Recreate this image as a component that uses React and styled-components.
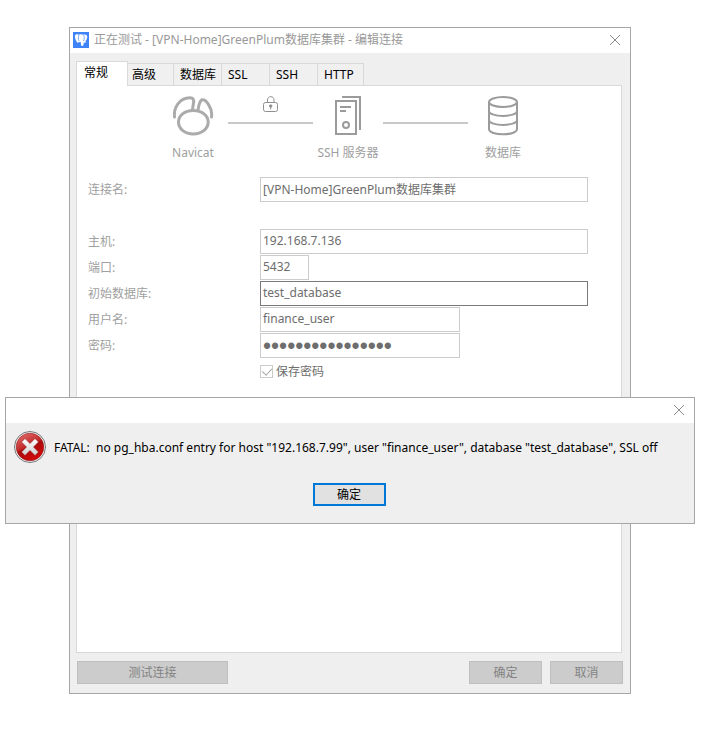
import React from "react";
import styled, { createGlobalStyle } from "styled-components";

const GlobalStyle = createGlobalStyle`
  * { box-sizing: border-box; }
  body { margin: 0; background: #fff; }
  body, button, input {
    font-family: "Noto Sans", "Noto Sans CJK SC", sans-serif;
    font-size: 12px;
    line-height: 18px;
  }
`;

const Desktop = styled.div`
  position: relative;
  display: flex;
  min-height: 100vh;
  padding: 27px 83px 37px 69px;
`;

const Window = styled.main`
  flex: 1;
  display: flex;
  flex-direction: column;
  border: 1px solid #a6a6a6;
  background: #efefef;
`;

const TitleBar = styled.header`
  display: flex;
  align-items: center;
  gap: 5px;
  height: 25px;
  padding: 0 9px 1px 3px;
  background: #fff;
`;

const Title = styled.h1`
  flex: 1;
  margin: 0;
  color: #999;
  font-size: 12px;
  font-weight: 400;
  white-space: nowrap;
`;

const CloseButton = styled.button`
  display: flex;
  margin-left: auto;
  padding: 0;
  border: 0;
  background: none;
  color: #8c8c8c;
`;

const Tabs = styled.div`
  display: flex;
  align-items: flex-end;
  height: 32px;
  padding: 0 6px;
`;

const Tab = styled.button`
  width: ${(p) => (p.$last ? 46 : 48)}px;
  height: 22px;
  padding: 0 0 0 6px;
  border: solid #d9d9d9;
  border-width: 1px 1px 0 0;
  background: #f0f0f0;
  color: #000;
  text-align: left;
  white-space: nowrap;

  &[aria-selected="true"] {
    z-index: 1;
    width: 52px;
    height: 25px;
    margin: 0 -2px -1px 0;
    padding: 0 0 2px 7px;
    border-left-width: 1px;
    background: #fff;
  }
`;

const Panel = styled.section`
  flex: 1;
  margin: 0 8px 0 6px;
  border: 1px solid #d9d9d9;
  background: #fff;
`;

const Route = styled.div`
  display: flex;
  justify-content: center;
  padding: 10px 2px 0 0;
  color: #a0a0a0;
`;

const Stop = styled.div`
  display: flex;
  flex-direction: column;
  align-items: center;
  gap: 8px;
  width: 70px;
  white-space: nowrap;
`;

const Link = styled.div`
  display: flex;
  flex-direction: column;
  align-items: center;
  width: 85px;

  &::after {
    content: "";
    width: 100%;
    height: 2px;
    margin-top: auto;
    margin-bottom: 38px;
    background: #c8c8c8;
  }
`;

const Form = styled.form`
  display: grid;
  grid-template-columns: 172px 1fr;
  grid-auto-rows: 25px;
  gap: 1px 0;
  padding: 15px 33px 0 11px;
`;

const Label = styled.label`
  grid-column: 1;
  align-self: center;
  color: #a0a0a0;
`;

const Spacer = styled.div`
  grid-column: 1 / -1;
`;

const Field = styled.input`
  width: ${(p) => p.$width || "100%"};
  height: 25px;
  padding: 0 2px 2px;
  border: 1px solid ${(p) => (p.$strong ? "#7a7a7a" : "#ccc")};
  border-radius: 0;
  outline: 0;
  background: #fff;
  color: #6d6d6d;

  &[type="password"] {
    padding: 2px 2px 0;
    font-family: "Liberation Sans", sans-serif;
    font-size: 23px;
  }
`;

const CheckLabel = styled.label`
  grid-column: 2;
  display: flex;
  align-items: center;
  gap: 3px;
  color: #6d6d6d;
`;

const CheckBox = styled.input`
  appearance: none;
  width: 13px;
  height: 13px;
  margin: 0;
  border: 1px solid #ccc;
  background: #fff;
  display: flex;
  justify-content: center;

  &:checked::after {
    content: "";
    width: 5px;
    height: 8px;
    border: solid #a8a8a8;
    border-width: 0 1px 1px 0;
    transform: rotate(42deg);
  }
`;

const Footer = styled.footer`
  display: flex;
  gap: 8px;
  padding: 8px 7px 9px;
`;

const Button = styled.button`
  width: ${(p) => (p.$wide ? 151 : 73)}px;
  height: 23px;
  margin-right: ${(p) => (p.$wide ? "auto" : 0)};
  padding: 0;
  border: ${(p) => (p.$primary ? "2px solid #0078d7" : "1px solid #bfbfbf")};
  background: ${(p) => (p.$primary ? "#e1e1e1" : "#ccc")};
  color: ${(p) => (p.$primary ? "#000" : "#838383")};
`;

const Dialog = styled.div`
  position: absolute;
  top: 397px;
  left: 5px;
  right: 19px;
  z-index: 2;
  border: 1px solid #a6a6a6;
  background: #efefef;
`;

const Message = styled.div`
  display: flex;
  align-items: center;
  gap: 8px;
  padding: 8px 8px 20px;
`;

const MessageText = styled.p`
  margin: 0;
  padding-top: 2px;
  color: #000;
  white-space: pre;
`;

const Actions = styled.div`
  display: flex;
  justify-content: center;
  padding: 0 2px 17px 0;
`;

const Svg = styled.svg`
  display: block;
  flex: none;
`;

const CloseIcon = () => (
  <Svg width="12" height="12" viewBox="0 0 12 12" stroke="currentColor" fill="none">
    <path d="M1 1l10 10M11 1L1 11" />
  </Svg>
);

const ElephantIcon = () => (
  <Svg width="16" height="16" viewBox="0 0 16 16">
    <rect width="16" height="16" fill="#3f83f8" />
    <path
      d="M2 3.5C3 2 5 2.200 6 2.800C7.500 2 9 2.200 10 2.800C12 2 14 2.500 14.300 4.500C14.300 6.500 13 8.500 12.200 9.500C13 9.800 13.500 9.500 13.500 10C12.500 11 11.200 10.800 10.800 10.500L10.500 13C10 14.300 8.300 14.300 8 13L7.700 9.800C7 10.500 6.300 10.300 6 9.800C5.500 10.800 4.300 11.200 3.700 9.800C2.600 7.500 1.500 5.500 2 3.500Z"
      fill="#fff"
    />
    <path
      d="M6 3C5 5 5.200 7 6 9M10.500 3C11.500 4.500 11.500 7 10.500 9"
      fill="none"
      stroke="#3f83f8"
      strokeWidth="0.700"
    />
  </Svg>
);

const NavicatIcon = () => (
  <Svg
    width="42"
    height="40"
    viewBox="0 0 42 40"
    fill="none"
    stroke="#ababab"
    strokeWidth="3"
    strokeLinejoin="round"
    strokeLinecap="round"
  >
    <path d="M2.500 21C1.500 12 7 2 18 1.800C21.500 1.800 22 4 21.500 7L20.500 13.500" />
    <path d="M26 14.300C26.500 10 27.500 6 29.500 4C33.500 2.500 41 12 39.500 21" />
    <path d="M21.300 14.500C12.500 14.500 6.500 19.500 6.500 26C6.500 33 13 38 21.300 38C29.500 38 36.200 33 36.200 26C36.200 19.500 30 14.500 21.300 14.500Z" />
  </Svg>
);

const ServerIcon = () => (
  <Svg width="26" height="40" viewBox="0 0 26 40" fill="none" stroke="#9b9b9b" strokeWidth="2">
    <path d="M7 1H25V34" />
    <rect x="1" y="5" width="20" height="33" />
    <path d="M5 11H16M5 15H11" />
    <circle cx="11" cy="29" r="3" />
  </Svg>
);

const DatabaseIcon = () => (
  <Svg width="30" height="40" viewBox="0 0 30 40" fill="none" stroke="#9b9b9b" strokeWidth="2">
    <ellipse cx="15" cy="6" rx="14" ry="5" />
    <path d="M1 6V33C1 40 29 40 29 33V6M1 15C1 21.500 29 21.500 29 15M1 24C1 30.500 29 30.500 29 24" />
  </Svg>
);

const LockIcon = () => (
  <Svg width="16" height="17" viewBox="0 0 16 17" fill="none" stroke="#8f8f8f">
    <rect x="0.500" y="6.500" width="14" height="9" rx="2" />
    <path d="M4.500 6.500V4C4.500 -0.500 11 -0.500 11 4V6.500" />
    <circle cx="7.700" cy="10" r="1.200" fill="#8f8f8f" />
    <path d="M7.700 10V13.500" />
  </Svg>
);

const ErrorIcon = () => (
  <Svg width="32" height="32" viewBox="0 0 32 32" role="img" aria-label="错误">
    <defs>
      <linearGradient id="ball" x1="0.2" y1="0" x2="0.7" y2="1">
        <stop offset="0" stopColor="#e06a6a" />
        <stop offset="0.45" stopColor="#c42a2a" />
        <stop offset="0.5" stopColor="#a80c0c" />
        <stop offset="1" stopColor="#d80808" />
      </linearGradient>
      <linearGradient id="cross" x1="0" y1="0" x2="0" y2="1">
        <stop offset="0" stopColor="#fff" />
        <stop offset="1" stopColor="#cfcfcf" />
      </linearGradient>
    </defs>
    <circle cx="16" cy="16" r="15.500" fill="#f4f4f4" stroke="#777" />
    <circle cx="16" cy="16" r="13.800" fill="url(#ball)" stroke="#8f1a1a" strokeWidth="0.600" />
    <path
      d="M11 7.500L16 12.500L21 7.500L24.500 11L19.500 16L24.500 21L21 24.500L16 19.500L11 24.500L7.500 21L12.500 16L7.500 11Z"
      fill="url(#cross)"
      stroke="#8c1010"
      strokeWidth="0.500"
    />
  </Svg>
);

const tabs = ["常规", "高级", "数据库", "SSL", "SSH", "HTTP"];

const fields = [
  { id: "name", label: "连接名:", value: "[VPN-Home]GreenPlum数据库集群", gap: true },
  { id: "host", label: "主机:", value: "192.168.7.136" },
  { id: "port", label: "端口:", value: "5432", width: "49px" },
  { id: "database", label: "初始数据库:", value: "test_database", strong: true },
  { id: "user", label: "用户名:", value: "finance_user", width: "200px" },
  { id: "password", label: "密码:", value: "0123456789abcdef", width: "200px", type: "password" },
];

export default function App() {
  return (
    <Desktop>
      <GlobalStyle />
      <Window>
        <TitleBar>
          <ElephantIcon />
          <Title>正在测试 - [VPN-Home]GreenPlum数据库集群 - 编辑连接</Title>
          <CloseButton aria-label="关闭">
            <CloseIcon />
          </CloseButton>
        </TitleBar>
        <Tabs role="tablist">
          {tabs.map((name, i) => (
            <Tab key={name} role="tab" aria-selected={i === 0} $last={i === tabs.length - 1}>
              {name}
            </Tab>
          ))}
        </Tabs>
        <Panel role="tabpanel">
          <Route>
            <Stop>
              <NavicatIcon />
              Navicat
            </Stop>
            <Link>
              <LockIcon />
            </Link>
            <Stop>
              <ServerIcon />
              SSH 服务器
            </Stop>
            <Link />
            <Stop>
              <DatabaseIcon />
              数据库
            </Stop>
          </Route>
          <Form>
            {fields.map((f) => (
              <React.Fragment key={f.id}>
                <Label htmlFor={f.id}>{f.label}</Label>
                <Field
                  id={f.id}
                  type={f.type || "text"}
                  defaultValue={f.value}
                  autoComplete="off"
                  $width={f.width}
                  $strong={f.strong}
                />
                {f.gap && <Spacer />}
              </React.Fragment>
            ))}
            <CheckLabel>
              <CheckBox type="checkbox" defaultChecked />
              保存密码
            </CheckLabel>
          </Form>
        </Panel>
        <Footer>
          <Button $wide>测试连接</Button>
          <Button>确定</Button>
          <Button>取消</Button>
        </Footer>
      </Window>
      <Dialog role="alertdialog" aria-describedby="message">
        <TitleBar>
          <CloseButton aria-label="关闭">
            <CloseIcon />
          </CloseButton>
        </TitleBar>
        <Message>
          <ErrorIcon />
          <MessageText id="message">
            {'FATAL:  no pg_hba.conf entry for host "192.168.7.99", user "finance_user", database "test_database", SSL off'}
          </MessageText>
        </Message>
        <Actions>
          <Button $primary>确定</Button>
        </Actions>
      </Dialog>
    </Desktop>
  );
}
